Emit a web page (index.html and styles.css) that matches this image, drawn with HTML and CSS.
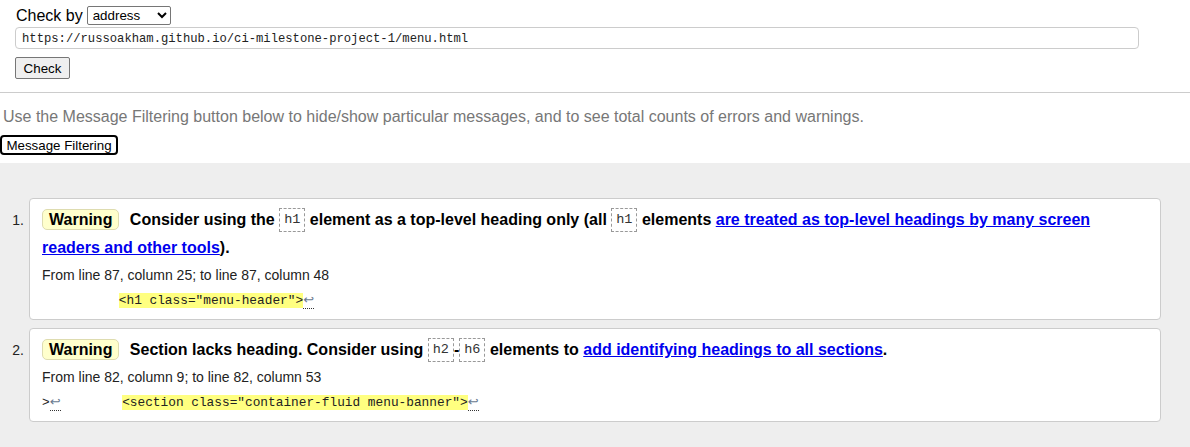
FILE: index.html
```html
<!DOCTYPE html>
<html lang="en">
<head>
<meta charset="utf-8">
<title>Nu Html Checker</title>
<link rel="stylesheet" href="styles.css">
</head>
<body>
<form class="check-form">
  <div class="check-by">
    <span class="label">Check by</span>
    <select class="select"><option>address</option></select>
  </div>
  <input class="url" type="url" value="https://russoakham.github.io/ci-milestone-project-1/menu.html">
  <div class="check-row"><button class="check-btn" type="button">Check</button></div>
</form>
<hr class="rule">
<section class="filter-intro">
  <p class="note">Use the Message Filtering button below to hide/show particular messages, and to see total counts of errors and warnings.</p>
  <button class="filter-btn" type="button">Message Filtering</button>
</section>
<section class="results">
  <ol class="messages">
    <li class="item">
      <span class="num">1.</span>
      <div class="card">
        <p class="msg"><span class="badge">Warning</span> Consider using the <code class="tag">h1</code> element as a top-level heading only (all <code class="tag">h1</code> elements <a href="#">are treated as top-level headings by many screen readers and other tools</a>).</p>
        <p class="loc">From line 87, column 25; to line 87, column 48</p>
        <p class="extract">          <mark>&lt;h1 class="menu-header"&gt;</mark><span class="lf">↩</span></p>
      </div>
    </li>
    <li class="item">
      <span class="num">2.</span>
      <div class="card">
        <p class="msg"><span class="badge">Warning</span> Section lacks heading. Consider using <code class="tag">h2</code>-<code class="tag">h6</code> elements to <a href="#">add identifying headings to all sections</a>.</p>
        <p class="loc">From line 82, column 9; to line 82, column 53</p>
        <p class="extract">&gt;<span class="lf">↩</span>        <mark>&lt;section class="container-fluid menu-banner"&gt;</mark><span class="lf">↩</span></p>
      </div>
    </li>
  </ol>
</section>
</body>
</html>
```

FILE: styles.css
```css
* { box-sizing: border-box; }
html, body { margin: 0; padding: 0; background: #fff; }
body {
  font-family: "Liberation Sans", Arial, sans-serif;
  font-size: 16px;
  color: #000;
}

.check-form { margin: 0; padding: 6px 15px 0; }
.check-by { display: flex; align-items: center; height: 19px; gap: 4px; }
.label { font-size: 16px; line-height: 19px; padding-left: 1px; }
.select {
  width: 84px; height: 19px; margin: 0; padding: 0 0 0 1px;
  font: 13.33px "Liberation Sans", Arial, sans-serif;
  color: #000; background: #fff;
  border: 1px solid #767676; border-radius: 2px;
}
.url {
  display: block; margin: 2px 0 0;
  width: 1124px; height: 22px; padding: 2px 6px 0;
  border: 1px solid #ccc; border-radius: 4px;
  font: 12.2px "Liberation Mono", "DejaVu Sans Mono", monospace;
  color: #222; background: #fff;
}
.check-row { margin-top: 8px; }
.check-btn {
  width: 55px; height: 22px; padding: 0; margin: 0;
  font: 13.33px "Liberation Sans", Arial, sans-serif;
  color: #000; background: #efefef;
  border: 1px solid #767676; border-radius: 2px;
}

.rule { height: 0; border: 0; border-top: 1px solid #ccc; margin: 13px 0 0; }

.filter-intro { padding: 0; }
.note { margin: 15px 0 0 3px; line-height: 18px; color: #777; }
.filter-btn {
  display: block; margin: 9px 0 0;
  width: 118px; height: 20px; padding: 0;
  font: 13.33px "Liberation Sans", Arial, sans-serif;
  color: #000; background: #fff;
  border: 2px solid #000; border-radius: 4px;
}

.results { background: #eee; margin-top: 8px; padding: 35px 29px 30px 0; }
.messages {
  list-style: none; margin: 0; padding: 0;
  display: flex; flex-direction: column; gap: 8px;
}
.item { display: flex; }
.num {
  flex: none; width: 29px; padding: 8px 5px 0 0;
  text-align: right; font-size: 14px; line-height: 28px; color: #222;
}
.card {
  flex: 1; background: #fff;
  border: 1px solid #ccc; border-radius: 4px;
  padding: 7px 12px 6px;
}
.msg { margin: 0; font-weight: bold; line-height: 28px; }
.msg a { color: #0000ee; text-decoration: underline; }
.badge {
  display: inline-block; line-height: 19px; padding: 0 6px;
  background: #ffffcc; border: 1px solid #dedcb0; border-radius: 5px;
  margin-right: 6px;
}
.tag {
  display: inline-block; vertical-align: 2px;
  font: normal 13.5px "Liberation Mono", "DejaVu Sans Mono", monospace;
  line-height: 22px; padding: 0 4px;
  border: 1px dashed #999; color: #333;
}
.loc { margin: 0; font-size: 14px; line-height: 26px; color: #222; }
.extract {
  margin: 0; white-space: pre;
  font: 12.8px "Liberation Mono", "DejaVu Sans Mono", monospace;
  line-height: 25px; color: #222;
}
.extract mark { background: #ffff80; color: #222; }
.lf {
  display: inline-block; width: 11px; line-height: 16px;
  color: #6a7a90; border-bottom: 1px dotted #333;
  font-family: "DejaVu Sans", sans-serif; font-size: 13px;
  text-align: center;
}
```
